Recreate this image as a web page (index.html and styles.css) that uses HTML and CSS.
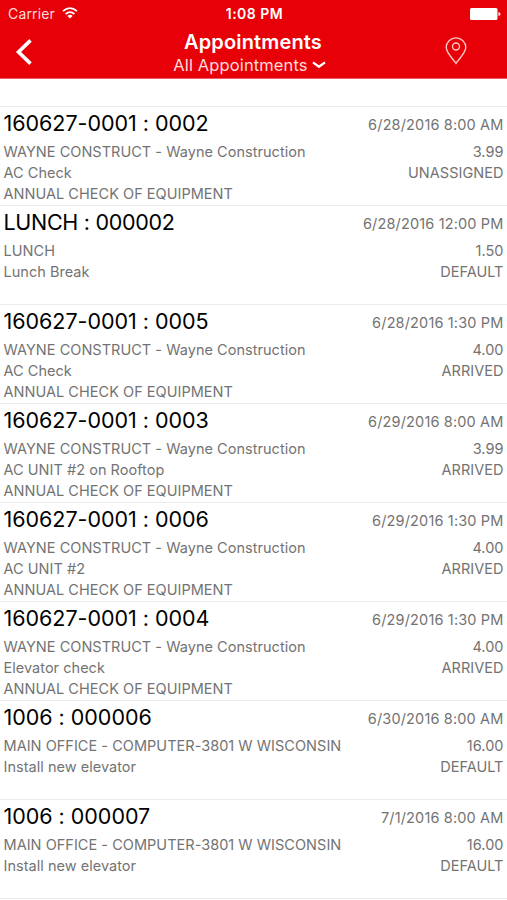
FILE: index.html
```html
<!DOCTYPE html>
<html lang="en">
<head>
<meta charset="utf-8">
<title>Appointments</title>
<link rel="stylesheet" href="styles.css">
</head>
<body>
<header class="header">
  <div class="status">
    <div class="carrier"><span>Carrier</span>
      <svg class="wifi" width="16" height="12" viewBox="0 0 16 12" fill="none" stroke="#fff" stroke-width="1.8"><path d="M1 4.2Q8-2 15 4.2M3.6 7Q8 3.2 12.4 7"/><path d="M8 11.4L5.4 8.9Q8 6.7 10.6 8.9Z" fill="#fff" stroke="none"/></svg>
    </div>
    <time class="clock">1:08 PM</time>
    <svg class="battery" width="31" height="12" viewBox="0 0 31 12" fill="#fff"><rect width="27.5" height="12" rx="1.5"/><path d="M28.5 4Q30.5 4.5 30.5 6T28.5 8Z"/></svg>
  </div>
  <nav class="nav">
    <svg class="back" width="18" height="26" viewBox="0 0 18 26" fill="none" stroke="#fff" stroke-width="3.6"><path d="M15.5 1.4L3.5 13L15.5 24.6"/></svg>
    <div class="heading">
      <h1>Appointments</h1>
      <div class="filter"><span>All Appointments</span>
        <svg width="14" height="8" viewBox="0 0 14 8" fill="none" stroke="#fff" stroke-width="2.3"><path d="M1 1.4L7 5.8L13 1.4"/></svg>
      </div>
    </div>
    <svg class="pin" width="22" height="28" viewBox="0 0 22 28" fill="none" stroke="#ffc4c4" stroke-width="1.4"><path d="M11 26.4C8.5 22.5 1.2 16 1.2 10.3A9.8 9.4 0 0 1 20.8 10.3C20.8 16 13.5 22.5 11 26.4Z"/><circle cx="11" cy="9.5" r="3.5"/></svg>
  </nav>
</header>
<main class="list">
  <article class="row"><h2>160627-0001 : 0002</h2><time>6/28/2016 8:00 AM</time><p>WAYNE CONSTRUCT - Wayne Construction</p><p>3.99</p><p>AC Check</p><p>UNASSIGNED</p><p>ANNUAL CHECK OF EQUIPMENT</p></article>
  <article class="row"><h2 class="tight">LUNCH : 000002</h2><time>6/28/2016 12:00 PM</time><p>LUNCH</p><p>1.50</p><p>Lunch Break</p><p>DEFAULT</p></article>
  <article class="row"><h2>160627-0001 : 0005</h2><time>6/28/2016 1:30 PM</time><p>WAYNE CONSTRUCT - Wayne Construction</p><p>4.00</p><p>AC Check</p><p>ARRIVED</p><p>ANNUAL CHECK OF EQUIPMENT</p></article>
  <article class="row"><h2>160627-0001 : 0003</h2><time>6/29/2016 8:00 AM</time><p>WAYNE CONSTRUCT - Wayne Construction</p><p>3.99</p><p>AC UNIT #2 on Rooftop</p><p>ARRIVED</p><p>ANNUAL CHECK OF EQUIPMENT</p></article>
  <article class="row"><h2>160627-0001 : 0006</h2><time>6/29/2016 1:30 PM</time><p>WAYNE CONSTRUCT - Wayne Construction</p><p>4.00</p><p>AC UNIT #2</p><p>ARRIVED</p><p>ANNUAL CHECK OF EQUIPMENT</p></article>
  <article class="row"><h2>160627-0001 : 0004</h2><time>6/29/2016 1:30 PM</time><p>WAYNE CONSTRUCT - Wayne Construction</p><p>4.00</p><p>Elevator check</p><p>ARRIVED</p><p>ANNUAL CHECK OF EQUIPMENT</p></article>
  <article class="row"><h2>1006 : 000006</h2><time>6/30/2016 8:00 AM</time><p>MAIN OFFICE - COMPUTER-3801 W WISCONSIN</p><p>16.00</p><p>Install new elevator</p><p>DEFAULT</p></article>
  <article class="row"><h2>1006 : 000007</h2><time>7/1/2016 8:00 AM</time><p>MAIN OFFICE - COMPUTER-3801 W WISCONSIN</p><p>16.00</p><p>Install new elevator</p><p>DEFAULT</p></article>
</main>
</body>
</html>
```
FILE: styles.css
```css
* { box-sizing: border-box; }
body {
  margin: 0;
  height: 900px;
  overflow: hidden;
  background: #fff;
  font-family: Inter, "Liberation Sans", sans-serif;
}
h1, h2, p { margin: 0; font-weight: 400; }
svg { display: block; flex: none; }
.header {
  height: 79px;
  background: #e80008;
  border-bottom: 1px solid #ee5a5e;
  color: #fff;
}
.status {
  display: grid;
  grid-template-columns: 1fr auto 1fr;
  align-items: center;
  height: 27px;
  padding: 0 6px 0 8px;
  font-size: 14px;
  line-height: 27px;
}
.carrier { display: flex; align-items: center; gap: 7px; color: #ffdcdc; letter-spacing: .15px; }
.wifi { margin-top: -2px; }
.clock { font-weight: 600; letter-spacing: .5px; }
.battery { justify-self: end; }
.nav {
  display: grid;
  grid-template-columns: 1fr auto 1fr;
  height: 51px;
}
.back { margin: 12px 0 0 15px; }
.heading { margin: 4px 8px 0 0; text-align: center; }
h1 { padding-left: 7px; font-size: 20px; font-weight: 600; line-height: 23px; letter-spacing: .15px; }
.filter {
  display: flex;
  align-items: center;
  gap: 4px;
  font-size: 16.5px;
  line-height: 22px;
  letter-spacing: .12px;
  color: #ffdcdc;
}
.pin { justify-self: end; margin: 10px 40px 0 0; }
.list { margin-top: 27px; border-top: 1px solid #ebebeb; }
.row {
  display: grid;
  grid-template-columns: 1fr auto;
  grid-template-rows: 34.2px 20.7px 20.7px 20.7px;
  height: 99px;
  padding: 0 3.5px;
  border-bottom: 1px solid #ebebeb;
  color: #737373;
  font-size: 14.5px;
  line-height: 21px;
  letter-spacing: .03px;
  white-space: nowrap;
}
h2 { color: #000; font-size: 21.5px; line-height: 33px; letter-spacing: -.03px; }
.tight { letter-spacing: -.3px; }
.row time { line-height: 36px; letter-spacing: .15px; text-align: right; }
.row p:nth-of-type(even) { text-align: right; }
```
